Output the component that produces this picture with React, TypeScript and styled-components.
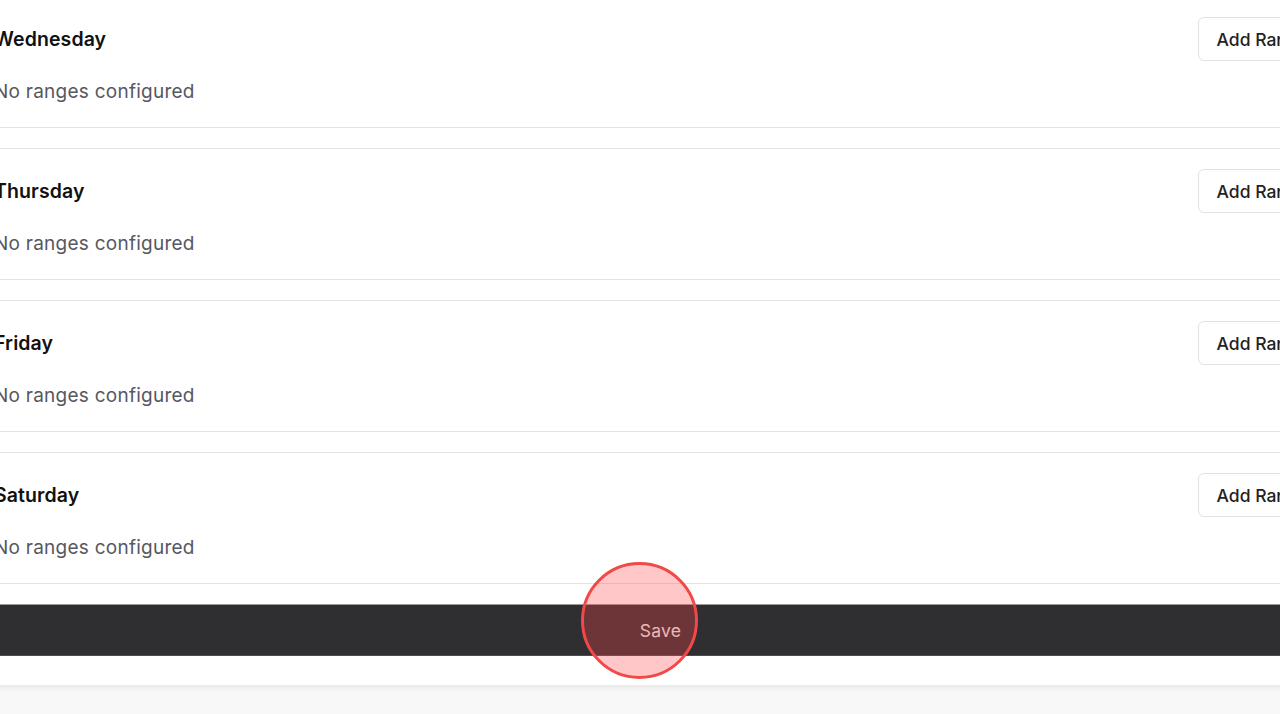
import styled, { createGlobalStyle } from "styled-components";

const GlobalStyle = createGlobalStyle`
  html, body {
    margin: 0;
    padding: 0;
    background: #f8f8f8;
    overflow: hidden;
    font-family: Inter, "Noto Sans", "Liberation Sans", sans-serif;
  }
`;

const Page = styled.div`
  position: relative;
  height: 714px;
  overflow: hidden;
`;

const Card = styled.div`
  display: flex;
  flex-direction: column;
  gap: 20px;
  margin: -4px -71px 0 -30px;
  padding: 0 24px 29px;
  background: #ffffff;
  box-shadow: 0 2px 8px rgba(0, 0, 0, 0.08);
`;

const DaySection = styled.section`
  display: flex;
  flex-direction: column;
  gap: 17px;
  padding: 20px 0 21px;
  border-top: 1px solid #e4e4e4;
  border-bottom: 1px solid #e4e4e4;
`;

const DayHeader = styled.div`
  display: flex;
  align-items: center;
  justify-content: space-between;
  height: 44px;
`;

const DayTitle = styled.h3`
  margin: 0 0 1px;
  font-size: 19.5px;
  font-weight: 600;
  color: #111111;
  letter-spacing: 0.1px;
`;

const OutlineButton = styled.button`
  height: 44px;
  padding: 0 18px;
  border: 1px solid #e2e2e2;
  border-radius: 6px;
  background: #ffffff;
  font-family: inherit;
  font-size: 17.5px;
  font-weight: 500;
  color: #222222;
  cursor: pointer;
`;

const EmptyText = styled.p`
  margin: 0;
  line-height: 28px;
  font-size: 19px;
  letter-spacing: 0.25px;
  color: #575760;
`;

const SaveButton = styled.button`
  height: 52px;
  width: 100%;
  border: 1px solid #4c4c4e;
  border-top-color: #9a9a9a;
  background: #2f2f31;
  color: #e8e8e8;
  font-family: inherit;
  font-size: 17.5px;
  font-weight: 400;
  letter-spacing: 0.3px;
  cursor: pointer;
`;

const ClickMarker = styled.div`
  position: absolute;
  left: 581px;
  top: 562px;
  width: 117px;
  height: 117px;
  border-radius: 50%;
  border: 3px solid #f24848;
  box-sizing: border-box;
  background: rgba(255, 70, 70, 0.3);
  pointer-events: none;
`;

const days = ["Wednesday", "Thursday", "Friday", "Saturday"];

export default function App() {
  return (
    <>
      <GlobalStyle />
      <Page>
        <Card>
          {days.map((day) => (
            <DaySection key={day}>
              <DayHeader>
                <DayTitle>{day}</DayTitle>
                <OutlineButton>Add Range</OutlineButton>
              </DayHeader>
              <EmptyText>No ranges configured</EmptyText>
            </DaySection>
          ))}
          <SaveButton>Save</SaveButton>
        </Card>
        <ClickMarker />
      </Page>
    </>
  );
}
